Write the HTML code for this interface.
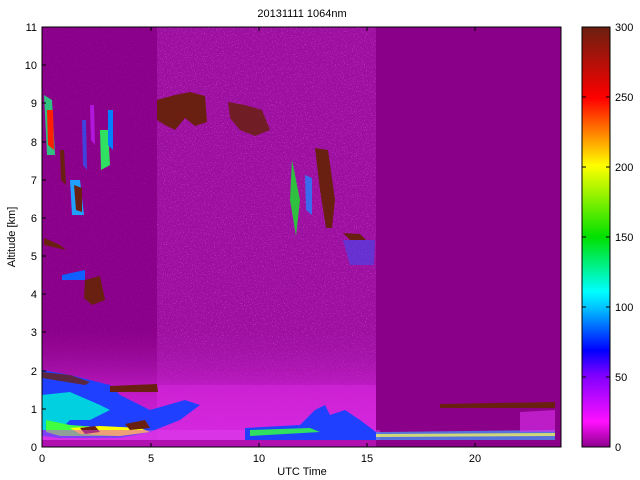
<!DOCTYPE html>
<html><head><style>
body{margin:0;background:#fff;width:640px;height:480px;overflow:hidden;font-family:"Liberation Sans",sans-serif}
svg{display:block}
text{font-family:"Liberation Sans",sans-serif;font-size:11px;fill:#000}
</style></head><body>
<svg width="640" height="480" viewBox="0 0 640 480">
<defs>
<linearGradient id="cb" x1="0" y1="1" x2="0" y2="0">
<stop offset="0" stop-color="#8c008c"/>
<stop offset="0.06" stop-color="#ff10ff"/>
<stop offset="0.17" stop-color="#8000ff"/>
<stop offset="0.23" stop-color="#0000ff"/>
<stop offset="0.33" stop-color="#00c0ff"/>
<stop offset="0.37" stop-color="#00ffff"/>
<stop offset="0.5" stop-color="#00e000"/>
<stop offset="0.67" stop-color="#ffff00"/>
<stop offset="0.83" stop-color="#ff0000"/>
<stop offset="1" stop-color="#6a2010"/>
</linearGradient>
<linearGradient id="low" x1="0" y1="0" x2="0" y2="1">
<stop offset="0" stop-color="#a818a8" stop-opacity="0"/>
<stop offset="0.6" stop-color="#d020d8"/>
<stop offset="1" stop-color="#e030f0"/>
</linearGradient>
<filter id="nz" x="0" y="0" width="100%" height="100%">
<feTurbulence type="fractalNoise" baseFrequency="0.9" numOctaves="1" seed="3"/>
<feColorMatrix values="0 0 0 0 0.85  0 0 0 0 0.1  0 0 0 0 0.9  0 0 0 3 -1.7"/>
</filter>
</defs>
<text x="302" y="17" text-anchor="middle">20131111 1064nm</text>
<rect x="42" y="27" width="519" height="420" fill="#8a0089"/>
<rect x="157" y="27" width="219" height="420" fill="#9c10a0"/>
<rect x="157" y="27" width="219" height="420" filter="url(#nz)" opacity="0.8"/>
<rect x="42" y="27" width="115" height="420" filter="url(#nz)" opacity="0.25"/>
<rect x="42" y="330" width="334" height="110" fill="url(#low)" opacity="0.8"/>
<rect x="157" y="385" width="219" height="55" fill="#d828e0" opacity="0.5"/>
<rect x="42" y="440" width="334" height="7" fill="#b010b0"/>
<!-- boundary layer left -->
<path d="M42 370 L70 375 L110 385 L120 395 L150 410 L185 400 L200 405 L180 420 L150 432 L120 438 L60 438 L42 436Z" fill="#2040ff"/>
<path d="M42 395 L70 392 L100 405 L110 410 L90 420 L70 420 L60 430 L42 430Z" fill="#00d0e0"/>
<path d="M46 420 L70 425 L110 428 L140 430 L120 436 L60 436 L46 432Z" fill="#40ff40"/>
<path d="M70 428 L100 426 L140 428 L150 432 L120 436 L80 434Z" fill="#ffff00"/>
<path d="M80 428 L95 426 L100 432 L85 434Z M125 424 L145 420 L150 428 L130 430Z" fill="#6a2010"/>
<path d="M42 430 L380 430 L380 440 L42 440Z" fill="#e040f0" opacity="0.5"/>
<path d="M110 386 L157 384 L158 392 L110 392Z" fill="#6a2010"/>
<path d="M42 372 L70 375 L90 382 L85 385 L42 378Z" fill="#6a2010" opacity="0.8"/>
<!-- mid boundary -->
<path d="M245 428 L300 425 L315 410 L325 405 L330 415 L345 410 L360 420 L376 432 L376 440 L245 440Z" fill="#2040ff"/>
<path d="M250 430 L310 428 L320 432 L250 436Z" fill="#30e060"/>
<path d="M376 432 L555 430 L555 440 L376 440Z" fill="#40a0ff" opacity="0.7"/>
<path d="M376 434 L555 433 L555 436 L376 437Z" fill="#f0f060" opacity="0.8"/>
<path d="M520 412 L555 410 L555 432 L520 432Z" fill="#e030f0" opacity="0.6"/>
<path d="M440 404 L555 402 L555 408 L440 408Z" fill="#6a2010"/>
<!-- high clouds -->
<path d="M157 100 L175 95 L190 92 L205 96 L207 122 L195 126 L185 118 L175 130 L165 125 L157 120Z" fill="#6a2010"/>
<path d="M228 102 L245 105 L262 110 L270 130 L255 136 L240 130 L230 118Z" fill="#6a2010" opacity="0.85"/>
<path d="M315 148 L328 150 L335 200 L332 228 L326 228 L320 190Z" fill="#6a2010"/>
<path d="M292 160 L300 200 L296 236 L290 200Z" fill="#30c040"/>
<path d="M305 175 L312 178 L312 215 L306 210Z" fill="#2080ff" opacity="0.8"/>
<!-- left cirrus streaks -->
<path d="M44 95 L52 100 L55 155 L47 155Z" fill="#30c080"/>
<path d="M47 110 L53 110 L54 150 L48 145Z" fill="#ff2000"/>
<path d="M70 180 L80 180 L84 215 L72 215Z" fill="#20a0ff"/>
<path d="M74 185 L82 188 L82 212 L76 210Z" fill="#6a2010"/>
<path d="M60 150 L64 150 L66 185 L61 180Z" fill="#6a2010"/>
<path d="M100 130 L108 130 L110 165 L101 170Z" fill="#30e060"/>
<path d="M108 110 L113 110 L113 150 L108 145Z" fill="#0080ff"/>
<path d="M82 120 L86 120 L87 170 L83 165Z" fill="#2060ff" opacity="0.7"/>
<path d="M90 105 L94 105 L95 145 L91 140Z" fill="#c020ff" opacity="0.7"/>
<!-- 4km brown -->
<path d="M85 280 L100 276 L105 300 L92 305 L84 298Z" fill="#6a2010"/>
<path d="M62 275 L85 270 L85 280 L62 280Z" fill="#1060ff"/>
<path d="M44 238 L60 245 L66 250 L44 245Z" fill="#6a2010"/>
<!-- 5km cirrus right -->
<path d="M343 233 L360 234 L366 240 L350 240Z" fill="#6a2010"/>
<path d="M343 240 L375 240 L374 265 L350 265Z" fill="#3050ff" opacity="0.5"/>
<rect x="42" y="27" width="519" height="420" fill="none" stroke="#000" stroke-width="1"/>
<g stroke="#000" stroke-width="1">
<path d="M42 447h4M42 409h4M42 371h4M42 332h4M42 294h4M42 256h4M42 218h4M42 180h4M42 142h4M42 103h4M42 65h4M42 27h4"/>
<path d="M151 447v-4M259 447v-4M367 447v-4M475 447v-4M151 27v4M259 27v4M367 27v4M475 27v4"/>
</g>
<g text-anchor="end">
<text x="37" y="451">0</text><text x="37" y="413">1</text><text x="37" y="375">2</text><text x="37" y="336">3</text><text x="37" y="298">4</text><text x="37" y="260">5</text><text x="37" y="222">6</text><text x="37" y="184">7</text><text x="37" y="146">8</text><text x="37" y="107">9</text><text x="37" y="69">10</text><text x="37" y="31">11</text>
</g>
<g text-anchor="middle">
<text x="42" y="462">0</text><text x="151" y="462">5</text><text x="259" y="462">10</text><text x="367" y="462">15</text><text x="475" y="462">20</text>
</g>
<text x="302" y="475" text-anchor="middle">UTC Time</text>
<text transform="translate(15 237) rotate(-90)" text-anchor="middle">Altitude [km]</text>
<rect x="582" y="27" width="28" height="420" fill="url(#cb)" stroke="#000"/>
<g stroke="#000"><path d="M606 377h4M606 307h4M606 237h4M606 167h4M606 97h4M582 377h4M582 307h4M582 237h4M582 167h4M582 97h4"/></g>
<g>
<text x="615" y="451">0</text><text x="615" y="381">50</text><text x="615" y="311">100</text><text x="615" y="241">150</text><text x="615" y="171">200</text><text x="615" y="101">250</text><text x="615" y="31">300</text>
</g>
</svg>
</body></html>
